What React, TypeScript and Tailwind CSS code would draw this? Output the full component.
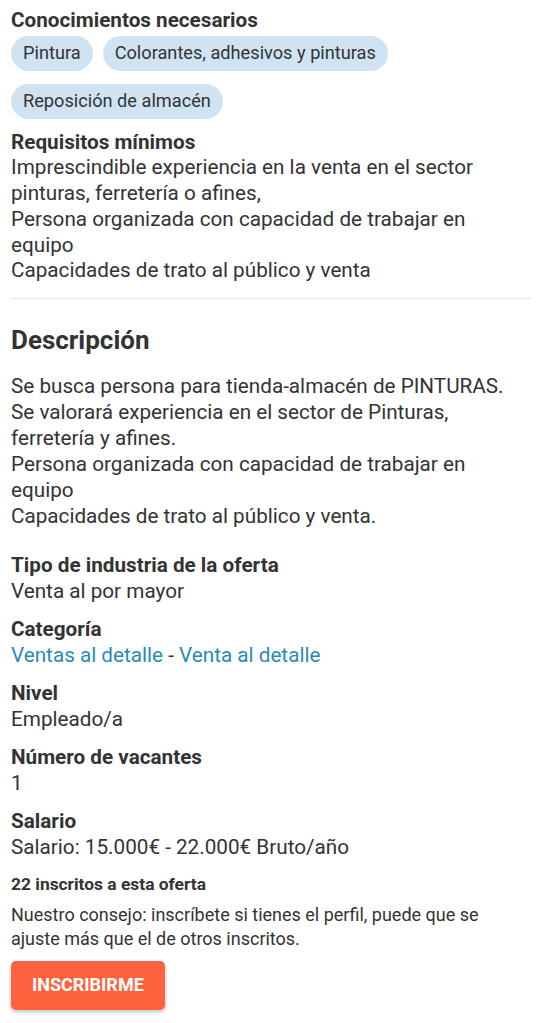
const chips = ["Pintura", "Colorantes, adhesivos y pinturas", "Reposición de almacén"];

const Field = ({ title, children }: { title: string; children: React.ReactNode }) => (
  <div className="mt-[12px]">
    <h3 className="font-bold">{title}</h3>
    <div>{children}</div>
  </div>
);

export default function App() {
  return (
    <div
      className="min-h-[1023px] bg-white px-[11px] text-[20.7px] leading-[26px] text-[#333333]"
      style={{ fontFamily: "Roboto, 'Liberation Sans', sans-serif" }}
    >
      <section className="pt-[8px]">
        <h3 className="font-bold leading-[25.7px]">Conocimientos necesarios</h3>
        <div className="mt-[2px] flex flex-wrap gap-x-[10px] gap-y-[13px]">
          {chips.map((c) => (
            <span
              key={c}
              className="flex h-[35px] items-center rounded-full bg-[#d0e3f3] px-[12px] text-[18.2px] text-[#333333]"
            >
              {c}
            </span>
          ))}
        </div>
      </section>

      <section className="mt-[11px] leading-[25.7px]">
        <h3 className="font-bold">Requisitos mínimos</h3>
        <p>
          Imprescindible experiencia en la venta en el sector pinturas, ferretería o afines,
          <br />
          Persona organizada con capacidad de trabajar en equipo
          <br />
          Capacidades de trato al público y venta
        </p>
      </section>

      <hr className="mt-[14px] border-t border-[#e6e6e6]" />

      <h2 className="mt-[26px] text-[26px] font-bold leading-[30px]">Descripción</h2>

      <p className="mt-[18px]">
        Se busca persona para tienda-almacén de PINTURAS.
        <br />
        Se valorará experiencia en el sector de Pinturas, ferretería y afines.
        <br />
        Persona organizada con capacidad de trabajar en equipo
        <br />
        Capacidades de trato al público y venta.
      </p>

      <div className="mt-[23px]">
        <h3 className="font-bold">Tipo de industria de la oferta</h3>
        <div>Venta al por mayor</div>
      </div>
      <Field title="Categoría">
        <a className="text-[#2a8bb8]">Ventas al detalle</a> - <a className="text-[#2a8bb8]">Venta al detalle</a>
      </Field>
      <Field title="Nivel">Empleado/a</Field>
      <Field title="Número de vacantes">1</Field>
      <Field title="Salario">Salario: 15.000€ - 22.000€ Bruto/año</Field>

      <p className="mt-[12px] text-[17.4px] font-bold leading-[24px]">22 inscritos a esta oferta</p>
      <p className="mt-[7px] max-w-[480px] text-[18px] leading-[24px]">
        Nuestro consejo: inscríbete si tienes el perfil, puede que se ajuste más que el de otros inscritos.
      </p>
      <button className="mt-[10px] h-[49px] rounded-[5px] bg-[#ff623f] px-[21px] text-[18px] font-bold uppercase text-white shadow-[0_2px_4px_rgba(0,0,0,0.25)]">
        Inscribirme
      </button>
    </div>
  );
}
